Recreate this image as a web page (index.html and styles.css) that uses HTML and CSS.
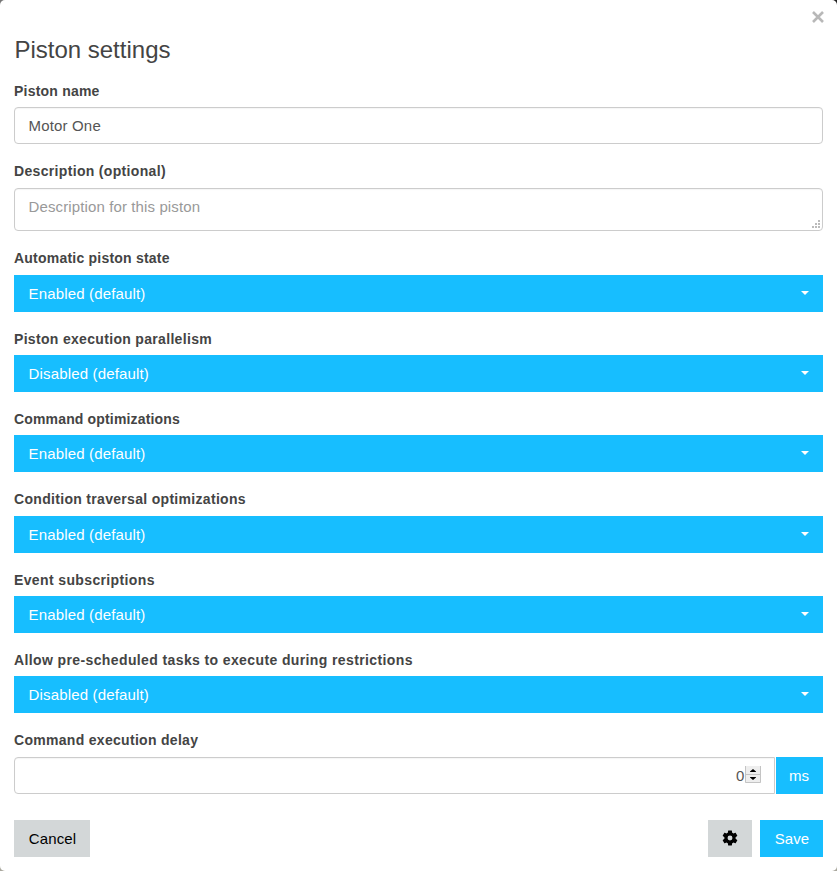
FILE: index.html
```
<!DOCTYPE html>
<html lang="en">
<head>
<meta charset="utf-8">
<title>Piston settings</title>
<link rel="stylesheet" href="styles.css">
</head>
<body>
<form class="dialog">
  <button type="button" class="close" aria-label="Close"><svg width="12" height="12" viewBox="0 0 12 12"><path d="M1 1 11 11M11 1 1 11"/></svg></button>
  <h1><span>Piston settings</span></h1>
  <div class="group name"><label><span>Piston name</span></label><input class="field" type="text" value="Motor One"></div>
  <div class="group description raised"><label><span>Description (optional)</span></label>
    <div class="area"><textarea class="field" placeholder="Description for this piston"></textarea>
      <svg class="grip" width="9" height="8" viewBox="0 0 9 8"><path d="M6 0h2v2h-2zM3 3h2v2h-2zM6 3h2v2h-2zM0 6h2v2h-2zM3 6h2v2h-2zM6 6h2v2h-2z"/></svg></div></div>
  <div class="group state raised"><label><span>Automatic piston state</span></label><button type="button" class="select"><span>Enabled (default)</span><i class="caret"></i></button></div>
  <div class="group parallelism"><label><span>Piston execution parallelism</span></label><button type="button" class="select"><span>Disabled (default)</span><i class="caret"></i></button></div>
  <div class="group commands"><label><span>Command optimizations</span></label><button type="button" class="select"><span>Enabled (default)</span><i class="caret"></i></button></div>
  <div class="group conditions raised"><label><span>Condition traversal optimizations</span></label><button type="button" class="select"><span>Enabled (default)</span><i class="caret"></i></button></div>
  <div class="group events"><label><span>Event subscriptions</span></label><button type="button" class="select"><span>Enabled (default)</span><i class="caret"></i></button></div>
  <div class="group tasks"><label><span>Allow pre-scheduled tasks to execute during restrictions</span></label><button type="button" class="select"><span>Disabled (default)</span><i class="caret"></i></button></div>
  <div class="group delay raised"><label><span>Command execution delay</span></label>
    <div class="row"><div class="field number"><span>0</span>
      <svg width="16" height="18" viewBox="0 0 16 18"><path class="box" d="M0 0h16v17H0z"/><path class="edge" d="M.5 0v16.500h15V0M0 8.500h16"/><path class="arrow" d="M8 3 11 5.500V6H5v-.5zM8 14 5 11.500V11h6v.5z"/></svg></div>
      <span class="unit">ms</span></div></div>
  <footer>
    <button type="button" class="btn cancel">Cancel</button>
    <button type="button" class="btn gear" aria-label="Options"><svg width="18" height="18" viewBox="0 0 24 24"><path d="M19.43 12.98c.04-.32.07-.64.07-.98s-.03-.66-.07-.98l2.110-1.650c.19-.15.24-.42.12-.64l-2-3.460c-.12-.22-.39-.3-.61-.22l-2.490 1c-.52-.4-1.080-.73-1.690-.98l-.38-2.650C14.460 2.180 14.250 2 14 2h-4c-.25 0-.46.18-.49.42l-.38 2.650c-.61.25-1.170.59-1.690.98l-2.490-1c-.23-.09-.49 0-.61.22l-2 3.460c-.13.22-.07.49.12.64l2.110 1.650c-.04.32-.07.65-.07.98s.03.66.07.98l-2.110 1.650c-.19.15-.24.42-.12.64l2 3.460c.12.22.39.3.61.22l2.490-1c.52.4 1.080.73 1.690.98l.38 2.650c.03.24.24.42.49.42h4c.25 0 .46-.18.49-.42l.38-2.650c.61-.25 1.170-.59 1.690-.98l2.490 1c.23.09.49 0 .61-.22l2-3.460c.12-.22.07-.49-.12-.64zM12 15.300A3.300 3.300 0 1 1 12 8.700a3.300 3.300 0 0 1 0 6.600z"/></svg></button>
    <button type="button" class="btn save">Save</button>
  </footer>
</form>
</body>
</html>
```
FILE: styles.css
```
* { box-sizing: border-box; }
html { background: linear-gradient(90deg, #777, #222) top / 100% 50% no-repeat, #aaa89e; }
body { margin: 0; font: 15px/20px "Liberation Sans", Arial, sans-serif; color: #444; }
button { font: inherit; border: 0; border-radius: 0; }
.dialog { position: relative; height: 871px; padding: 35px 14px 0; background: #fff; border-radius: 5px; display: flex; flex-direction: column; }
.close { position: absolute; right: 13px; top: 11px; width: 12px; height: 12px; padding: 0; background: none; }
.close svg { display: block; fill: none; stroke: #b8b8b8; stroke-width: 2.6; }
h1 { margin: 0; height: 46px; padding-left: .4px; font-size: 24px; line-height: 30px; font-weight: 400; }
.group { height: 80px; flex: none; }
label { display: block; height: 26px; font-size: 14px; font-weight: 700; line-height: 20px; }
.raised label { height: 27px; }
.group.description { height: 87px; }
.group.state, .group.conditions { height: 81px; }
.name label { letter-spacing: .21px; }
.description label { letter-spacing: .33px; }
.state label { letter-spacing: .22px; }
.parallelism label { letter-spacing: .32px; }
.commands label { letter-spacing: .16px; }
.conditions label { letter-spacing: .31px; }
.events label { letter-spacing: .37px; }
.tasks label { letter-spacing: .385px; }
.delay label { letter-spacing: .3px; }
.field { display: block; width: 100%; height: 37px; margin: 0; padding: 0 13px 0 13.5px; border: 1px solid #ccc; border-radius: 4px; background: #fff; color: #555; font: inherit; letter-spacing: .17px; box-shadow: inset 0 1px 1px rgba(0,0,0,.04); outline: 0; }
.area { position: relative; }
textarea.field { height: 43px; padding-top: 8px; resize: none; overflow: hidden; letter-spacing: .12px; }
textarea::placeholder { color: #999; }
.grip { position: absolute; right: 2px; bottom: 3px; fill: #bbb; }
.select { display: flex; width: 100%; height: 37px; align-items: center; justify-content: space-between; padding: 1px 14px 0 14.5px; background: #17beff; color: #fff; letter-spacing: .16px; }
.caret { margin-top: -2px; border: 4px solid transparent; border-top-color: #fff; border-bottom: 0; }
.group.delay { height: 83px; }
.row { display: flex; gap: 1px; }
.number { flex: 1; display: flex; align-items: center; justify-content: flex-end; padding-top: 1px; border-radius: 4px 0 0 4px; }
.number span { margin-right: .4px; }
.number svg { display: block; margin-top: -2px; }
.box { fill: #eee; }
.edge { fill: none; stroke: #c4c4c4; }
.arrow { fill: #000; }
.unit { width: 47px; height: 37px; padding-right: 1px; background: #17beff; color: #fff; text-align: center; line-height: 38px; }
footer { display: flex; gap: 8px; margin-top: 7px; }
.btn { height: 37px; padding: 1px 0 0; background: #d3d7d8; color: #000; letter-spacing: .1px; }
.cancel { width: 76px; padding-left: 1px; margin-right: auto; }
.gear { width: 44px; display: flex; align-items: center; justify-content: center; padding: 0 0 1px; }
.btn.save { width: 63px; padding-left: 1px; background: #17beff; color: #fff; }
```
